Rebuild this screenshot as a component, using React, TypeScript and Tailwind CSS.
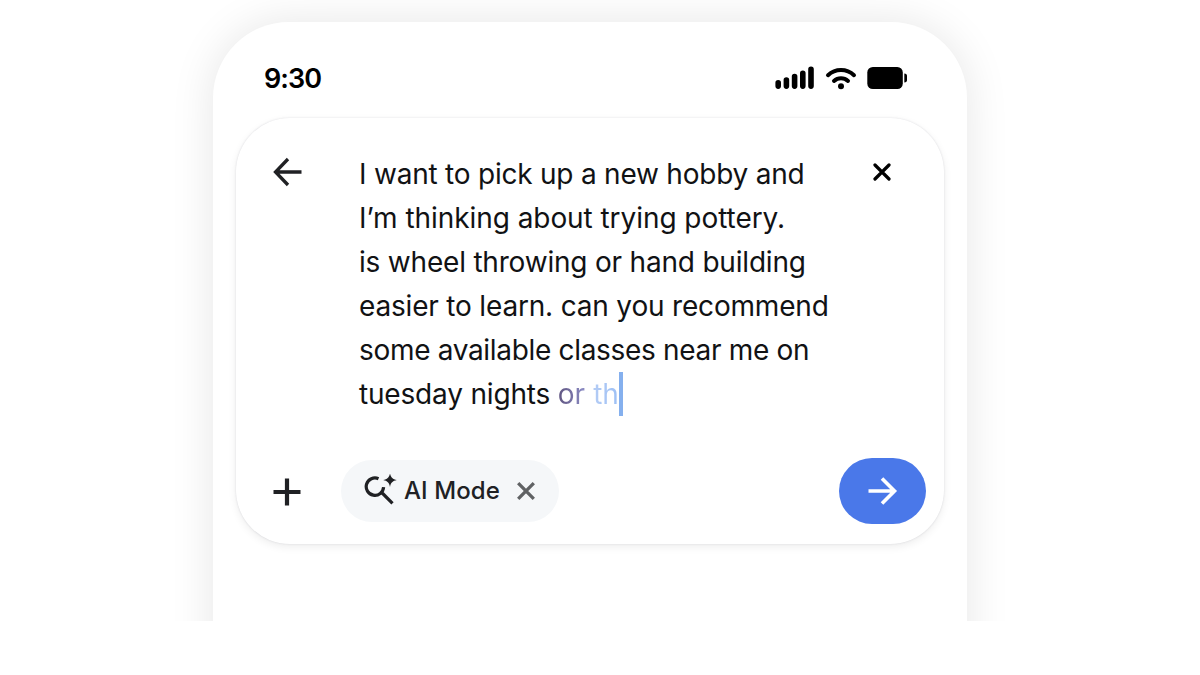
import React from 'react';

const lines = [
  { text: 'I want to pick up a new hobby and', tracking: 'tracking-[-0.22px]' },
  { text: 'I’m thinking about trying pottery.', tracking: 'tracking-[-0.06px]' },
  { text: 'is wheel throwing or hand building', tracking: 'tracking-[-0.2px]' },
  { text: 'easier to learn. can you recommend', tracking: 'tracking-[-0.18px]' },
  { text: 'some available classes near me on', tracking: 'tracking-[-0.32px]' },
];

function StatusIcons() {
  return (
    <svg width="134" height="26" viewBox="0 0 134 26" fill="none" stroke="#000" strokeLinecap="round">
      <g strokeWidth="5.6">
        <path d="M5.200 17.800v3.300M13.400 15v6.100M21.600 11.500v9.600M29.800 8.200v12.900M38 4.300v16.800" />
      </g>
      <path d="M55 10.200a19 19 0 0 1 26 0M61 15.900a10.500 10.500 0 0 1 14 0" strokeWidth="4" />
      <circle cx="68" cy="21.200" r="3" fill="#000" stroke="none" />
      <rect x="94.300" y="2" width="35.500" height="22" rx="5.500" fill="#000" stroke="none" />
      <path d="M131.300 8.500c2 .3 2.700 1 2.700 2.500v4c0 1.500-.7 2.200-2.700 2.500z" fill="#000" stroke="none" />
    </svg>
  );
}

function AiSearchIcon() {
  return (
    <svg width="36" height="34" viewBox="0 0 36 34" fill="none" stroke="#202124" strokeWidth="3.200">
      <path d="M14.500 4.700A8.700 8.700 0 1 0 19.600 13.200M16.700 17.500L28.500 29.300" />
      <path d="M26 -.5c.9 4 2.600 5.700 6.800 6.600-4.200.9-5.900 2.600-6.800 6.800-.9-4.200-2.600-5.900-6.800-6.800 4.200-.9 5.900-2.600 6.800-6.600z" fill="#202124" stroke="none" />
    </svg>
  );
}

function App() {
  return (
    <div className="h-[675px] w-[1200px] overflow-hidden bg-white font-['Inter',sans-serif]">
      <div className="h-[621px] overflow-hidden pl-[213px] pt-[22px]">
        <div className="h-[720px] w-[754px] rounded-[76px] bg-white px-[23px] shadow-[0_0_44px_rgba(0,0,0,0.1)]">
          <header className="flex h-[96px] items-center justify-between pl-[28px] pr-[37px] pt-[16px]">
            <span className="text-[27px] font-semibold leading-none tracking-[-0.9px] text-black">9:30</span>
            <StatusIcons />
          </header>

          <main className="flex h-[426px] w-[708px] flex-col rounded-[54px] bg-white shadow-[0_0_2px_rgba(60,64,90,0.16),0_3px_8px_rgba(0,0,0,0.07)]">
            <div className="flex h-[340px] pl-[37px] pt-[34px]">
              <button className="mt-[5px] h-[30px] w-[30px]" aria-label="Back">
                <svg width="30" height="30" viewBox="0 0 30 30" fill="none" stroke="#202124" strokeWidth="3.300">
                  <path d="M28.500 15H3M15 2L2.500 15 15 28" />
                </svg>
              </button>
              <div className="ml-[56px] w-[480px] whitespace-nowrap text-[28px] leading-[44px] text-[#111214]">
                {lines.map((line) => (
                  <p key={line.text}>
                    <span className={line.tracking}>{line.text}</span>
                  </p>
                ))}
                <p className="flex">
                  <span className="whitespace-pre tracking-[-0.18px]">tuesday nights </span>
                  <span className="bg-gradient-to-r from-[#5f5480] to-[#8c8dc6] bg-clip-text text-transparent">or</span>
                  <span className="ml-[8px] bg-gradient-to-r from-[#b4ccf5] to-[#9dc0f5] bg-clip-text text-transparent">th</span>
                  <span className="h-[44px] w-[4px] bg-[#85b0ee]" />
                </p>
              </div>
              <button className="ml-[34px] mt-[11px] h-[18px] w-[18px]" aria-label="Clear">
                <svg width="18" height="18" viewBox="0 0 18 18" stroke="#000" strokeWidth="3.200" strokeLinecap="round">
                  <path d="M2 2l14 14M16 2L2 16" />
                </svg>
              </button>
            </div>

            <div className="flex h-[66px] items-center pl-[37px] pr-[18px]">
              <button className="mt-[2px] h-[28px] w-[28px]" aria-label="Add">
                <svg width="28" height="28" viewBox="0 0 28 28" stroke="#202124" strokeWidth="4.200">
                  <path d="M14 .5v27M.5 14h27" />
                </svg>
              </button>
              <div className="ml-[40px] flex h-[62px] w-[218px] items-center rounded-full bg-[#f5f7f9] pl-[23px] text-[#202124]">
                <AiSearchIcon />
                <span className="ml-[4px] whitespace-nowrap text-[24px] font-medium tracking-[0.1px]">AI Mode</span>
                <svg className="ml-[17px]" width="18" height="18" viewBox="0 0 18 18" stroke="#606264" strokeWidth="3.300">
                  <path d="M1.200 1.200l15.600 15.600M16.800 1.200L1.200 16.800" />
                </svg>
              </div>
              <button className="ml-auto flex h-[66px] w-[87px] items-center justify-center rounded-full bg-[#4a78e9]" aria-label="Send">
                <svg width="30" height="28" viewBox="0 0 30 28" fill="none" stroke="#fff" strokeWidth="3.600">
                  <path d="M.5 14h26M14 1.500L26.500 14 14 26.500" />
                </svg>
              </button>
            </div>
          </main>
        </div>
      </div>
    </div>
  );
}

export default App;
